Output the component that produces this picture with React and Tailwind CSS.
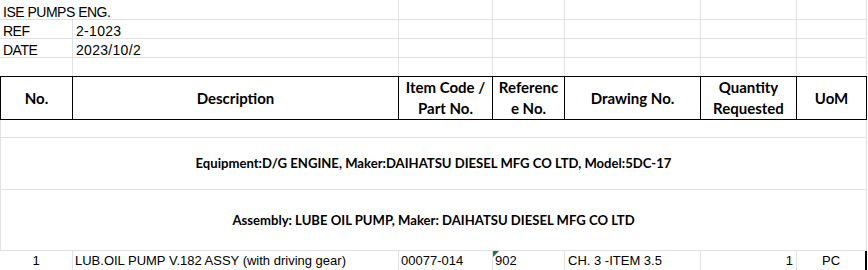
import React from "react";

const cols = "grid grid-cols-[73px_326px_94px_72px_136px_96px_70px]";
const line = "border-r border-b border-[#e1e1e1]";

function TopRow({ first, second, h, spanFirst, last }) {
  const b = last ? "border-r border-[#e1e1e1]" : line;
  return (
    <div className={`${cols} ${h} text-[14px] leading-[14px]`}>
      {spanFirst ? (
        <div className={`col-span-2 ${b} flex items-end pl-[3px] whitespace-nowrap tracking-[-0.5px]`}>{first}</div>
      ) : (
        <>
          <div className={`${b} flex items-end pl-[3px] whitespace-nowrap tracking-[-0.5px]`}>{first}</div>
          <div className={`${b} flex items-end pl-[3px] whitespace-nowrap tracking-[0.3px]`}>{second}</div>
        </>
      )}
      <div className={b} />
      <div className={b} />
      <div className={b} />
      <div className={b} />
      <div className={b} />
    </div>
  );
}

function Head({ children, first }) {
  return (
    <div
      className={`flex items-center justify-center text-center border-t border-b border-r border-black ${
        first ? "border-l" : ""
      }`}
    >
      {children}
    </div>
  );
}

export default function App() {
  return (
    <div className="w-[868px] h-[270px] overflow-hidden bg-white text-black font-['Liberation_Sans',Arial,sans-serif] text-[13px] leading-[15px]">
      {/* sheet header info */}
      <TopRow first="ISE PUMPS ENG." h="h-[20px]" spanFirst />
      <TopRow first="REF" second="2-1023" h="h-[19px]" />
      <TopRow first="DATE" second="2023/10/2" h="h-[19px]" />
      <TopRow h="h-[18px]" last />

      {/* column titles */}
      <div className={`${cols} h-[43px] font-['Lato',sans-serif] font-bold text-[15px] leading-[21px]`}>
        <Head first>No.</Head>
        <Head>Description</Head>
        <Head>
          Item Code /<br />
          Part No.
        </Head>
        <Head>
          Referenc
          <br />e No.
        </Head>
        <Head>Drawing No.</Head>
        <Head>
          Quantity
          <br />
          Requested
        </Head>
        <Head>UoM</Head>
      </div>

      <div className="w-[867px] h-[19px] border-l border-r border-b border-[#e1e1e1]" />

      <div className="w-[867px] h-[52px] border-l border-r border-b border-[#e1e1e1] flex items-center justify-center font-['Lato',sans-serif] font-bold text-[13.1px]">
        Equipment:D/G ENGINE, Maker:DAIHATSU DIESEL MFG CO LTD, Model:5DC-17
      </div>

      <div className="w-[867px] h-[61px] border-l border-r border-b border-[#e1e1e1] flex items-center justify-center font-['Lato',sans-serif] font-bold text-[13.1px]">
        Assembly: LUBE OIL PUMP, Maker: DAIHATSU DIESEL MFG CO LTD
      </div>

      {/* item row */}
      <div className={`${cols} h-[20px]`}>
        <div className={`${line} flex items-center justify-center`}>1</div>
        <div className={`${line} flex items-center pl-[2px] whitespace-nowrap`}>
          LUB.OIL PUMP V.182 ASSY (with driving gear)
        </div>
        <div className={`${line} flex items-center pl-[2px]`}>00077-014</div>
        <div className={`${line} relative flex items-center pl-[2px]`}>
          <span className="absolute left-0 top-0 w-0 h-0 border-t-[6px] border-r-[6px] border-t-[#107c41] border-r-transparent" />
          902
        </div>
        <div className={`${line} flex items-center pl-[3px]`}>CH. 3 -ITEM 3.5</div>
        <div className={`${line} flex items-center justify-end pr-[3px]`}>1</div>
        <div className="border-b border-r-2 border-b-[#e1e1e1] border-r-black flex items-center justify-center">PC</div>
      </div>
    </div>
  );
}
